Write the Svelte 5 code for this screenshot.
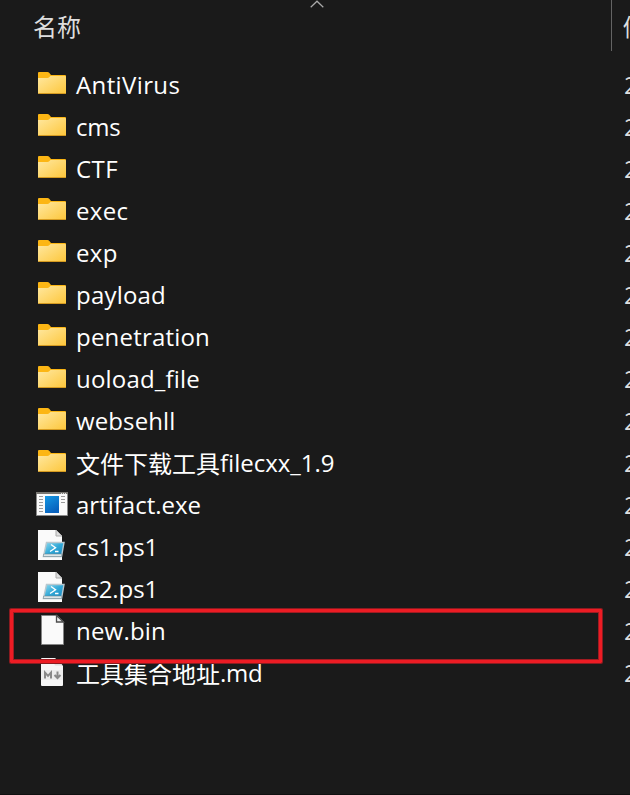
<script>
  const files = [
    { name: 'AntiVirus', kind: 'folder', track: 0.38 },
    { name: 'cms', kind: 'folder', track: -0.2 },
    { name: 'CTF', kind: 'folder', track: 0.4 },
    { name: 'exec', kind: 'folder', track: 0.3 },
    { name: 'exp', kind: 'folder', track: 0.3 },
    { name: 'payload', kind: 'folder', track: 0.2 },
    { name: 'penetration', kind: 'folder', track: 0.2 },
    { name: 'uoload_file', kind: 'folder', track: 0.2 },
    { name: 'websehll', kind: 'folder', track: 0.12 },
    { cjk: '文件下载工具', name: 'filecxx_1.9', kind: 'folder', track: 0 },
    { name: 'artifact.exe', kind: 'exe', track: 0 },
    { name: 'cs1.ps1', kind: 'ps', track: -0.1 },
    { name: 'cs2.ps1', kind: 'ps', track: -0.1 },
    { name: 'new.bin', kind: 'bin', track: 0.2 },
    { cjk: '工具集合地址', name: '.md', kind: 'md', track: -0.2 }
  ];
</script>

<main class="explorer">
  <header>
    <span class="title">名称</span>
    <svg class="sort" width="14" height="9" viewBox="0 0 14 9"><path d="M.7 7.3 7 1.2l6.3 6.1" fill="none" stroke="#aaa" stroke-width="1.2" /></svg>
    <span class="divider"></span>
    <span class="date-title">修</span>
  </header>
  <ul>
    {#each files as file}
      <li>
        <svg class="icon" width="32" height="32" viewBox="0 0 32 32">
          {#if file.kind === 'folder'}
            <defs>
              <linearGradient id="fold" x1="0" y1="0" x2="1" y2="1"><stop stop-color="#ffe8a0" /><stop offset="1" stop-color="#fdc63a" /></linearGradient>
            </defs>
            <path d="M2 5q0-1 1-1h8.500q1 0 1.700.8L15 7h14q1 0 1 1v3H2z" fill="#fcb614" />
            <path d="M2 10h9.500q1 0 1.700-.7L14.500 8H29q1 0 1 1v16q0 1-1 1H3q-1 0-1-1z" fill="url(#fold)" />
            <path d="M2.500 25.500h27" stroke="#d59a20" stroke-width="1" />
          {:else if file.kind === 'exe'}
            <defs><linearGradient id="blue" x1="0" y1="0" x2=".5" y2="1"><stop stop-color="#1599e4" /><stop offset="1" stop-color="#0861bd" /></linearGradient></defs>
            <path d="M.5 4.500h31v23H.5z" fill="#fafafa" stroke="#8a8a8a" />
            <path d="M0 4h32v2H0z" fill="#787671" />
            <path d="M25 5.500h1m1 0h1m1 0h1" stroke="#ddd" />
            <path d="M3 8.500h4m-4 3h4m-4 3h4m-4 3h4m-4 3h4m-4 3h4M25 8.500h4m-4 3h4m-4 3h4" stroke="#9a9a9a" />
            <path d="M9 8h14v17H9z" fill="url(#blue)" />
          {:else if file.kind === 'ps'}
            <defs><linearGradient id="shell" x1="0" y1="0" x2="1" y2="1"><stop stop-color="#91dcf0" /><stop offset=".5" stop-color="#30a8d7" /><stop offset="1" stop-color="#1683bd" /></linearGradient></defs>
            <path d="M2 0h18l6 6v24H2z" fill="#fafafa" />
            <path d="M20 0v6h6" fill="#ddd" stroke="#aaa" />
            <path d="M10.500 12.500h17.500l-2.500 14H7.500z" fill="url(#shell)" stroke="#b9c8cf" stroke-width="1.400" />
            <path d="m7.700 24-.5 2.500h18.300l.5-2.500z" fill="#dce6e8" stroke="#6b8792" stroke-width=".6" />
            <path d="m15 14.500 4.500 3.300-5.500 3.700m5 0h3.500" fill="none" stroke="#fff" stroke-width="1.400" />
          {:else if file.kind === 'bin'}
            <path d="M5.500 1.500H21l6.500 6.500v22.500h-22z" fill="#fafafa" stroke="#858585" />
            <path d="M20.500 1.500v6.500h7z" fill="#eee" stroke="#4c4c4c" stroke-width="1.300" />
          {:else}
            <path d="M6 2h13l8 8v19q0 1-1 1H6q-1 0-1-1V3q0-1 1-1z" fill="#f7f7f7" />
            <path d="M18.500 2v6.500q0 1 1 1H27z" fill="#dedede" />
            <path d="M5 14h22v10H5z" fill="#ececec" />
            <path d="M9 22.500v-6l3 3.300 3-3.300v6" fill="none" stroke="#898989" stroke-width="2" />
            <path d="M21.500 15.500v6m-3-2.500 3 3 3-3" fill="none" stroke="#898989" stroke-width="2" />
          {/if}
        </svg>
        <span class="name">{#if file.cjk}<span class="cjk">{file.cjk}</span>{/if}<span style="letter-spacing: {file.track}px">{file.name}</span></span>
        <span class="date">2</span>
      </li>
    {/each}
  </ul>
  <div class="highlight"></div>
</main>

<style>
  .explorer {
    position: relative;
    box-sizing: border-box;
    width: 630px;
    height: 795px;
    overflow: hidden;
    background: #1a1a1a;
    border-bottom: 1px solid #101010;
    color: #fff;
    font: 24px/42px "Open Sans", "Noto Sans CJK SC", sans-serif;
  }
  header {
    display: flex;
    height: 64px;
    color: #dedede;
    font-family: "Noto Sans CJK SC", sans-serif;
  }
  .title { flex: none; width: 277px; padding-left: 33px; line-height: 52px; }
  .sort { flex: none; }
  .divider { flex: none; width: 1px; height: 51px; margin-left: 287px; background: #646464; }
  .date-title { flex: none; width: 24px; margin-left: 11px; line-height: 52px; }
  ul { margin: 0; padding: 0; list-style: none; }
  li { display: flex; height: 42px; padding-left: 36px; white-space: nowrap; }
  .icon { flex: none; margin-top: 4px; }
  .name { flex: none; display: flex; width: 548px; margin-left: 8px; }
  .cjk { font-family: "Noto Sans CJK SC", sans-serif; }
  .date { flex: none; color: #dedede; }
  .highlight {
    position: absolute;
    left: 10px;
    top: 609px;
    box-sizing: border-box;
    width: 592px;
    height: 54px;
    border: 3px solid #ed1c24;
    border-radius: 1px;
    box-shadow: 0 0 0 1px #8a1b20, inset 0 0 0 1px #a01b21;
  }
</style>
